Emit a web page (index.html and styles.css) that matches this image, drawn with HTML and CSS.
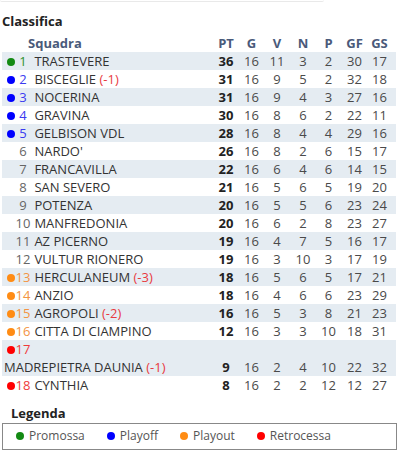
FILE: index.html
```html
<!DOCTYPE html>
<html lang="it">
<head>
<meta charset="utf-8">
<title>Classifica</title>
<link rel="stylesheet" href="styles.css">
</head>
<body>
<div class="page">
  <div class="topline"></div>
  <h2 class="title">Classifica</h2>
  <table class="standings">
    <colgroup>
      <col class="c-team"><col class="c-pt"><col class="c-g"><col class="c-v"><col class="c-n"><col class="c-p"><col class="c-gf"><col class="c-gs">
    </colgroup>
    <thead>
      <tr><th class="team">Squadra</th><th>PT</th><th>G</th><th>V</th><th>N</th><th>P</th><th>GF</th><th class="last">GS</th></tr>
    </thead>
    <tbody>
      <tr class="z-promo"><td class="team"><span class="dot"></span><span class="rk">1</span> <span class="nm">TRASTEVERE</span></td><td class="pt">36</td><td>16</td><td>11</td><td>3</td><td>2</td><td>30</td><td class="last">17</td></tr>
      <tr class="z-play"><td class="team"><span class="dot"></span><span class="rk">2</span> <span class="nm">BISCEGLIE <span class="pen">(-1)</span></span></td><td class="pt">31</td><td>16</td><td>9</td><td>5</td><td>2</td><td>32</td><td class="last">18</td></tr>
      <tr class="z-play"><td class="team"><span class="dot"></span><span class="rk">3</span> <span class="nm">NOCERINA</span></td><td class="pt">31</td><td>16</td><td>9</td><td>4</td><td>3</td><td>27</td><td class="last">16</td></tr>
      <tr class="z-play"><td class="team"><span class="dot"></span><span class="rk">4</span> <span class="nm">GRAVINA</span></td><td class="pt">30</td><td>16</td><td>8</td><td>6</td><td>2</td><td>22</td><td class="last">11</td></tr>
      <tr class="z-play"><td class="team"><span class="dot"></span><span class="rk">5</span> <span class="nm">GELBISON VDL</span></td><td class="pt">28</td><td>16</td><td>8</td><td>4</td><td>4</td><td>29</td><td class="last">16</td></tr>
      <tr class="z-none"><td class="team"><span class="dot"></span><span class="rk">6</span> <span class="nm">NARDO'</span></td><td class="pt">26</td><td>16</td><td>8</td><td>2</td><td>6</td><td>15</td><td class="last">17</td></tr>
      <tr class="z-none"><td class="team"><span class="dot"></span><span class="rk">7</span> <span class="nm">FRANCAVILLA</span></td><td class="pt">22</td><td>16</td><td>6</td><td>4</td><td>6</td><td>14</td><td class="last">15</td></tr>
      <tr class="z-none"><td class="team"><span class="dot"></span><span class="rk">8</span> <span class="nm">SAN SEVERO</span></td><td class="pt">21</td><td>16</td><td>5</td><td>6</td><td>5</td><td>19</td><td class="last">20</td></tr>
      <tr class="z-none"><td class="team"><span class="dot"></span><span class="rk">9</span> <span class="nm">POTENZA</span></td><td class="pt">20</td><td>16</td><td>5</td><td>5</td><td>6</td><td>23</td><td class="last">24</td></tr>
      <tr class="z-none"><td class="team"><span class="dot"></span><span class="rk">10</span> <span class="nm">MANFREDONIA</span></td><td class="pt">20</td><td>16</td><td>6</td><td>2</td><td>8</td><td>23</td><td class="last">27</td></tr>
      <tr class="z-none"><td class="team"><span class="dot"></span><span class="rk">11</span> <span class="nm">AZ PICERNO</span></td><td class="pt">19</td><td>16</td><td>4</td><td>7</td><td>5</td><td>16</td><td class="last">17</td></tr>
      <tr class="z-none"><td class="team"><span class="dot"></span><span class="rk">12</span> <span class="nm">VULTUR RIONERO</span></td><td class="pt">19</td><td>16</td><td>3</td><td>10</td><td>3</td><td>17</td><td class="last">19</td></tr>
      <tr class="z-out"><td class="team"><span class="dot"></span><span class="rk">13</span> <span class="nm">HERCULANEUM <span class="pen">(-3)</span></span></td><td class="pt">18</td><td>16</td><td>5</td><td>6</td><td>5</td><td>17</td><td class="last">21</td></tr>
      <tr class="z-out"><td class="team"><span class="dot"></span><span class="rk">14</span> <span class="nm">ANZIO</span></td><td class="pt">18</td><td>16</td><td>4</td><td>6</td><td>6</td><td>23</td><td class="last">29</td></tr>
      <tr class="z-out"><td class="team"><span class="dot"></span><span class="rk">15</span> <span class="nm">AGROPOLI <span class="pen">(-2)</span></span></td><td class="pt">16</td><td>16</td><td>5</td><td>3</td><td>8</td><td>21</td><td class="last">23</td></tr>
      <tr class="z-out"><td class="team"><span class="dot"></span><span class="rk">16</span> <span class="nm">CITTA DI CIAMPINO</span></td><td class="pt">12</td><td>16</td><td>3</td><td>3</td><td>10</td><td>18</td><td class="last">31</td></tr>
      <tr class="z-rel"><td class="team"><span class="dot"></span><span class="rk">17</span> <span class="nm">MADREPIETRA DAUNIA <span class="pen">(-1)</span></span></td><td class="pt">9</td><td>16</td><td>2</td><td>4</td><td>10</td><td>22</td><td class="last">32</td></tr>
      <tr class="z-rel"><td class="team"><span class="dot"></span><span class="rk">18</span> <span class="nm">CYNTHIA</span></td><td class="pt">8</td><td>16</td><td>2</td><td>2</td><td>12</td><td>12</td><td class="last">27</td></tr>
    </tbody>
  </table>
  <h3 class="legend-title">Legenda</h3>
  <div class="legend">
    <span class="item"><span class="ldot promo"></span>Promossa</span>
    <span class="item"><span class="ldot play"></span>Playoff</span>
    <span class="item"><span class="ldot out"></span>Playout</span>
    <span class="item"><span class="ldot rel"></span>Retrocessa</span>
  </div>
</div>
</body>
</html>
```

FILE: styles.css
```css
* { box-sizing: border-box; }
html, body { margin: 0; padding: 0; background: #fff; }
body { font-family: "Open Sans", "Noto Sans", sans-serif; color: #333; }
.page { padding: 0 2px; width: 400px; }

.topline {
  width: 324px;
  height: 2px;
  margin-left: -2px;
  border-bottom: 1px solid #e9e9e9;
  border-radius: 0 0 4px 4px;
}

.title {
  margin: 10px 0 4px 0;
  font-size: 13px;
  line-height: 18px;
  font-weight: 700;
  color: #222;
}

.standings {
  width: 394px;
  table-layout: fixed;
  border-collapse: collapse;
  border-spacing: 0;
  font-size: 13px;
  line-height: 18px;
}
.c-team { width: 211px; }
.c-pt { width: 26px; }
.c-g { width: 25px; }
.c-v { width: 26px; }
.c-n { width: 26px; }
.c-p { width: 25px; }
.c-gf { width: 27px; }
.c-gs { width: 28px; }

.standings th, .standings td {
  padding: 0;
  text-align: center;
  vertical-align: bottom;
  font-weight: 400;
}
.standings th {
  font-weight: 700;
  color: #4a5a7a;
}
.standings th.team { text-align: left; padding-left: 26px; }
.standings td { color: #4a4a4a; }
.standings .last { padding-right: 5px; }
.standings td.team { text-align: left; padding: 0 30px 0 2px; color: #333; }
.standings td.pt { font-weight: 700; color: #222; }
.standings tbody tr:nth-child(odd) td { background: #e5ecf2; }

.dot {
  display: inline-block;
  width: 8px;
  height: 8px;
  border-radius: 50%;
  margin-left: 3px;
  vertical-align: 0px;
}
.rk { display: inline-block; width: 16px; text-align: center; }
.nm { display: inline-block; white-space: nowrap; }
.pen { color: #e83a3f; }

.z-promo .dot { background: #138a13; }
.z-promo .rk { color: #2f922f; }
.z-play .dot { background: #0000ff; }
.z-play .rk { color: #3b3bf0; }
.z-none .rk { color: #666; }
.z-out .dot { background: #ff8c14; }
.z-out .rk { color: #f39444; }
.z-rel .dot { background: #ff0000; }
.z-rel .rk { color: #f03a3a; }

.legend-title {
  margin: 10px 0 1px 9px;
  font-size: 13px;
  line-height: 18px;
  font-weight: 700;
  color: #222;
}
.legend {
  width: 395px;
  border: 1px solid #888;
  padding: 3px 0 5px 13px;
  display: flex;
  gap: 22px;
  font-size: 12px;
  line-height: 17px;
  color: #555;
}
.item { display: flex; align-items: center; gap: 5px; }
.ldot { width: 8px; height: 8px; border-radius: 50%; }
.ldot.promo { background: #138a13; }
.ldot.play { background: #0000ff; }
.ldot.out { background: #ff8c14; }
.ldot.rel { background: #ff0000; }
```
